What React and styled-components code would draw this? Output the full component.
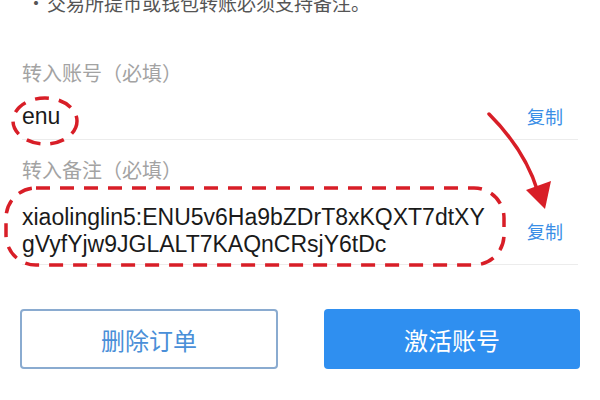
import React from "react";
import styled, { createGlobalStyle } from "styled-components";

const Global = createGlobalStyle`
  html, body { margin: 0; padding: 0; background: #fff; }
  body { width: 600px; height: 400px; overflow: hidden; font-family: "Liberation Sans", "Noto Sans CJK SC", sans-serif; }
`;

const Page = styled.div`
  position: relative;
  width: 600px;
  height: 400px;
  box-sizing: border-box;
  padding: 0 22px;
  display: flex;
  flex-direction: column;
`;

const Note = styled.div`
  margin-top: -8px;
  line-height: 22px;
  font-size: 19px;
  color: #555;
  display: flex;
  white-space: nowrap;
  font-family: "Noto Sans CJK SC", sans-serif;
`;

const Bullet = styled.span`
  flex: 0 0 25px;
  padding-left: 3px;
  box-sizing: border-box;
  text-align: center;
`;

const Label = styled.div`
  margin-top: ${(p) => p.$top}px;
  line-height: 22px;
  font-size: 20px;
  color: #a3a3a3;
  font-family: "Noto Sans CJK SC", sans-serif;
`;

const Row = styled.div`
  display: flex;
  align-items: center;
  justify-content: space-between;
  border-bottom: 1px solid #ececec;
  padding: ${(p) => p.$pad};
`;

const Value = styled.div`
  font-size: 23px;
  line-height: ${(p) => p.$lh}px;
  color: #1a1a1a;
  white-space: nowrap;
  font-family: "Liberation Sans", "Noto Sans CJK SC", sans-serif;
`;

const Copy = styled.span`
  font-size: 18px;
  color: #3a8ee6;
  margin-right: 15px;
  font-family: "Noto Sans CJK SC", sans-serif;
`;

const Buttons = styled.div`
  display: flex;
  justify-content: space-between;
  margin: 44px -2px 0;
`;

const Button = styled.div`
  width: ${(p) => (p.$primary ? 256 : 258)}px;
  height: 60px;
  box-sizing: border-box;
  border-radius: 4px;
  display: flex;
  align-items: center;
  justify-content: center;
  font-size: 24px;
  font-family: "Noto Sans CJK SC", sans-serif;
  background: ${(p) => (p.$primary ? "#2f8ff0" : "#fff")};
  color: ${(p) => (p.$primary ? "#fff" : "#4a8fd8")};
  border: ${(p) => (p.$primary ? "none" : "2px solid #8aabd0")};
`;

const Overlay = styled.svg`
  position: absolute;
  left: 0;
  top: 0;
  pointer-events: none;
`;

export default function App() {
  return (
    <>
      <Global />
      <Page>
        <Note>
          <Bullet>·</Bullet>
          交易所提币或钱包转账必须支持备注。
        </Note>
        <Label $top={48}>转入账号（必填）</Label>
        <Row $pad="17px 0 8px">
          <Value $lh={30}>enu</Value>
          <Copy>复制</Copy>
        </Row>
        <Label $top={19}>转入备注（必填）</Label>
        <Row $pad="23px 0 6px">
          <Value $lh={27}>
            xiaolinglin5:ENU5v6Ha9bZDrT8xKQXT7dtXY
            <br />
            gVyfYjw9JGLALT7KAQnCRsjY6tDc
          </Value>
          <Copy>复制</Copy>
        </Row>
        <Buttons>
          <Button>删除订单</Button>
          <Button $primary>激活账号</Button>
        </Buttons>
        <Overlay width="600" height="400" viewBox="0 0 600 400">
          <ellipse cx="45" cy="121" rx="32" ry="23" fill="none" stroke="#d81e27" strokeWidth="3.5" strokeDasharray="14 10" />
          <rect x="6" y="188" width="498" height="77" rx="30" fill="none" stroke="#d81e27" strokeWidth="3.5" strokeDasharray="14 10" />
          <path d="M489 114 Q 525 150 538 192" fill="none" stroke="#d81e27" strokeWidth="3.5" strokeLinecap="round" />
          <polygon points="526,190 551,181 545,209" fill="#d81e27" />
        </Overlay>
      </Page>
    </>
  );
}
